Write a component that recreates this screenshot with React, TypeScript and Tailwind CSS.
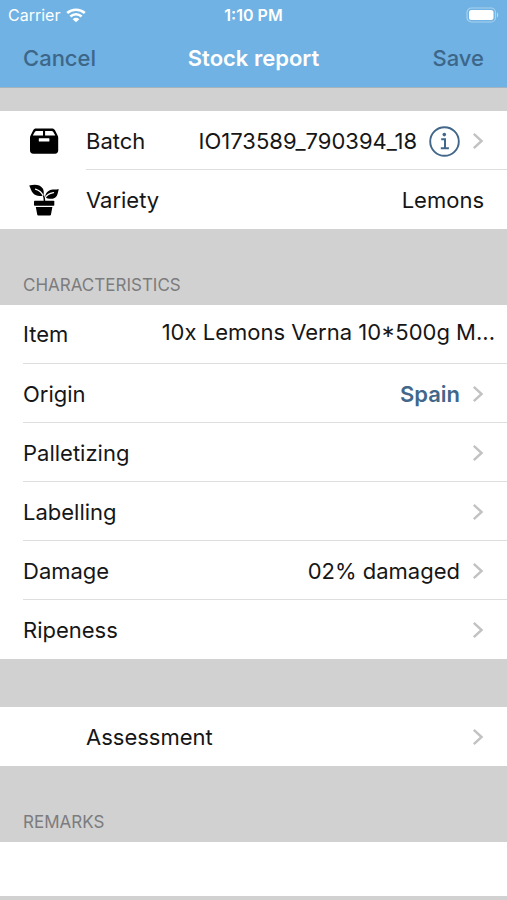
import type { ReactNode } from "react";

function WifiIcon() {
  return (
    <svg width="20" height="15" viewBox="0 0 20 15" fill="none" aria-hidden="true">
      <path d="M1.2 5.1C6.1 .6 13.900 .6 18.800 5.100" stroke="#fff" strokeWidth="2.700" />
      <path d="M4.400 8.500C7.600 5.500 12.400 5.500 15.600 8.500" stroke="#fff" strokeWidth="2.500" />
      <path d="M10 14.200 6.700 11.200C8.600 9.400 11.400 9.400 13.300 11.200Z" fill="#fff" />
    </svg>
  );
}

function BatteryIcon() {
  return (
    <svg width="33" height="16" viewBox="0 0 33 16" fill="none" aria-label="Battery full" role="img">
      <rect x="1" y="1" width="28.500" height="14" rx="4.500" stroke="#fff" strokeOpacity=".4" strokeWidth="1.200" />
      <rect x="3" y="3" width="24.500" height="10" rx="2.500" fill="#fff" />
      <path d="M31 5.500c1.600.6 1.600 4.400 0 5Z" fill="#fff" fillOpacity=".5" />
    </svg>
  );
}

function BoxIcon() {
  return (
    <svg width="30" height="26" viewBox="0 0 30 26" aria-hidden="true">
      <path d="M7 .5H23C24.300 .5 25.300 1 26 2.200L28.500 7.200C29 8 29.200 8.800 29.200 9.600V22.500C29.200 24.500 28 25.700 26 25.700H4.200C2.200 25.700 1 24.500 1 22.500V9.600C1 8.800 1.200 8 1.700 7.200L4.200 2.200C4.800 1 5.700 .5 7 .5Z" />
      <path d="M7.500 2.900H14V7.600H3.800L5.800 3.900C6.100 3.200 6.700 2.900 7.500 2.900ZM16.100 2.900H22.600C23.400 2.900 23.900 3.200 24.300 3.900L26.300 7.600H16.100ZM10.300 10.300H19.900Q20.400 10.300 20.400 10.800V12.900Q20.400 13.400 19.900 13.400H10.300Q9.800 13.400 9.800 12.900V10.800Q9.800 10.300 10.300 10.300Z" fill="#fff" />
    </svg>
  );
}

function PlantIcon() {
  return (
    <svg width="30" height="32" viewBox="0 0 30 32" aria-hidden="true">
      <path d="M.2 1.500C6 .2 11 .5 13.600 4.300C14.900 6.300 15 8.800 14.500 11.500C10.500 12.700 6.600 12.100 4.100 9.300C2.100 7 1.600 4 .2 1.500Z" />
      <path d="M29.800 5.300C28.500 9.600 28.500 14.200 23.400 14.700C20.700 15 18.300 14.600 16 13.300C16.400 9.800 18.100 7.200 21.200 6C24 5 27 5.600 29.800 5.300Z" />
      <path d="M6.500 5.200C10.500 6.400 13.200 9.300 14.600 12.500M24.500 8.600C20.300 9.300 17.400 11.200 16 14.200" fill="none" stroke="#fff" strokeWidth="1.300" strokeLinecap="round" />
      <path d="M14.400 11.500C15.200 12.900 15.500 14.200 15.500 17.500" fill="none" stroke="#000" strokeWidth="1.500" />
      <rect x="5" y="16.700" width="20.300" height="5" rx=".8" />
      <path d="M6.800 23H23.400L22 30.500Q21.800 31.400 20.900 31.400H9.300Q8.400 31.400 8.200 30.500Z" />
    </svg>
  );
}

function InfoIcon() {
  return (
    <svg width="31" height="31" viewBox="0 0 31 31" fill="none" stroke="#42678a" aria-hidden="true">
      <circle cx="15.500" cy="15.500" r="14.300" strokeWidth="1.900" />
      <circle cx="15.300" cy="8.600" r="1.800" fill="#42678a" stroke="none" />
      <path d="M12.200 13.200H16V22.200M11.800 22.300H19.900" strokeWidth="2" />
    </svg>
  );
}

function Chevron() {
  return (
    <svg className="shrink-0" width="12" height="18" viewBox="0 0 12 18" fill="none" aria-hidden="true">
      <path d="M1.800 1.800 9.600 9 1.800 16.200" stroke="#c2c2c4" strokeWidth="2.400" />
    </svg>
  );
}

const rowBox = "flex h-[59px] w-full items-center pl-[23px] text-left";

function Line({ children, last }: { children: ReactNode; last?: boolean }) {
  return (
    <span className={`flex h-full min-w-0 grow items-center justify-between gap-3 border-b pt-0.5 pr-[23px] ${last ? "border-transparent" : "border-[#dedee0]"}`}>
      {children}
    </span>
  );
}

function LinkRow({ label, value, strong, last }: { label: string; value?: string; strong?: boolean; last?: boolean }) {
  return (
    <button type="button" className={rowBox}>
      <Line last={last}>
        <span>{label}</span>
        <span className="flex items-center gap-3">
          {value && <span className={strong ? "font-semibold text-[#42678a]" : ""}>{value}</span>}
          <Chevron />
        </span>
      </Line>
    </button>
  );
}

export default function App() {
  return (
    <div className="min-h-screen bg-[#d1d1d1] font-['Inter','Liberation_Sans',sans-serif] text-[22px] leading-7 text-[#161616]">
      <header className="border-b border-[#a3b3c0] bg-[#70b2e3] text-white">
        <div className="grid h-[30px] grid-cols-3 items-center px-2 text-base">
          <span className="flex items-center gap-[6px]">
            Carrier <WifiIcon />
          </span>
          <span className="text-center font-semibold">1:10 PM</span>
          <span className="flex justify-end">
            <BatteryIcon />
          </span>
        </div>
        <div className="flex h-[57px] items-center justify-between px-[23px] pb-0.5 font-semibold">
          <button type="button" className="flex-1 text-left font-medium text-[#3d6689]">Cancel</button>
          <h1>Stock report</h1>
          <button type="button" className="flex-1 text-right font-medium text-[#3d6689]">Save</button>
        </div>
      </header>

      <main>
        <section className="mt-[23px] bg-white">
          <div className={rowBox}>
            <span className="w-[63px] shrink-0 pl-[6px]"><BoxIcon /></span>
            <Line>
              <span>Batch</span>
              <span className="flex items-center gap-3">
                <span>IO173589_790394_18</span>
                <button type="button" aria-label="Batch information"><InfoIcon /></button>
                <button type="button" aria-label="Open batch"><Chevron /></button>
              </span>
            </Line>
          </div>
          <div className={rowBox}>
            <span className="w-[63px] shrink-0 pl-[6px]"><PlantIcon /></span>
            <Line last>
              <span>Variety</span>
              <span>Lemons</span>
            </Line>
          </div>
        </section>

        <section>
          <h2 className="flex h-[76px] items-end px-[23px] pb-2 text-[17px] leading-6 text-[#7c7c7e]">CHARACTERISTICS</h2>
          <div className="bg-white">
            <div className={rowBox}>
              <span className="flex h-full min-w-0 grow items-center justify-between border-b border-[#dedee0] pr-3">
                <span>Item</span>
                <span className="pb-1 whitespace-nowrap">10x Lemons Verna 10*500g M...</span>
              </span>
            </div>
            <LinkRow label="Origin" value="Spain" strong />
            <LinkRow label="Palletizing" />
            <LinkRow label="Labelling" />
            <LinkRow label="Damage" value="02% damaged" />
            <LinkRow label="Ripeness" last />
          </div>
        </section>

        <section className="mt-12 bg-white">
          <button type="button" className={rowBox}>
            <span className="w-[63px] shrink-0" />
            <Line last>
              <span>Assessment</span>
              <Chevron />
            </Line>
          </button>
        </section>

        <section>
          <h2 className="px-[23px]">
            <label htmlFor="remarks" className="flex h-[76px] items-end pb-2 text-[17px] leading-6 text-[#7c7c7e]">REMARKS</label>
          </h2>
          <textarea id="remarks" rows={1} className="block h-[54px] w-full resize-none bg-white px-[23px] py-3 outline-none" />
        </section>
      </main>
    </div>
  );
}
